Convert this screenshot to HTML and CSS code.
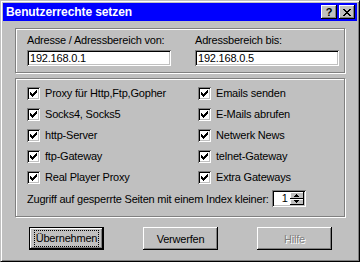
FILE: index.html
```html
<!DOCTYPE html>
<html lang="de">

<head>
    <meta charset="UTF-8">
    <title>Benutzerrechte setzen</title>
    <link rel="stylesheet" href="styles.css">
</head>

<body>
    <div class="window">
        <div class="titlebar">
            <span class="title">Benutzerrechte setzen</span>
            <div class="caption-buttons">
                <span class="cap cap-help">?</span>
                <span class="cap cap-close">
                    <svg width="8" height="7" viewBox="0 0 8 7">
                        <path d="M0 0h2v1H0z M6 0h2v1H6z M1 1h2v1H1z M5 1h2v1H5z M2 2h4v1H2z M3 3h2v1H3z M2 4h4v1H2z M1 5h2v1H1z M5 5h2v1H5z M0 6h2v1H0z M6 6h2v1H6z" fill="#000"/>
                    </svg>
                </span>
            </div>
        </div>

        <div class="client">
            <div class="group group-address">
                <div class="field">
                    <div class="label">Adresse / Adressbereich von:</div>
                    <div class="edit">192.168.0.1</div>
                </div>
                <div class="field">
                    <div class="label">Adressbereich bis:</div>
                    <div class="edit">192.168.0.5</div>
                </div>
            </div>

            <div class="group group-rights">
                <div class="checks" id="checks"></div>
                <div class="index-row">
                    <span>Zugriff auf gesperrte Seiten mit einem Index kleiner:</span>
                    <div class="spinner">
                        <span class="spin-value">1</span>
                        <div class="spin-buttons">
                            <span class="spin-btn">
                                <svg width="5" height="3" viewBox="0 0 5 3"><path d="M2 0h1v1H2z M1 1h3v1H1z M0 2h5v1H0z" fill="#000"/></svg>
                            </span>
                            <span class="spin-btn">
                                <svg width="5" height="3" viewBox="0 0 5 3"><path d="M0 0h5v1H0z M1 1h3v1H1z M2 2h1v1H2z" fill="#000"/></svg>
                            </span>
                        </div>
                    </div>
                </div>
            </div>

            <div class="buttons">
                <div class="btn btn-default"><span class="focus">Übernehmen</span></div>
                <div class="btn">Verwerfen</div>
                <div class="btn btn-disabled">Hilfe</div>
            </div>
        </div>
    </div>

    <script>
        let rights = [
            "Proxy für Http,Ftp,Gopher", "Socks4, Socks5", "http-Server", "ftp-Gateway", "Real Player Proxy",
            "Emails senden", "E-Mails abrufen", "Netwerk News", "telnet-Gateway", "Extra Gateways"
        ];

        const checks = document.getElementById("checks");
        rights.forEach((name) => {
            checks.innerHTML += `
            <div class="check">
                <span class="box"><svg width="13" height="13" viewBox="0 0 13 13"><path d="M3 5h1v3H3z M4 6h1v3H4z M5 7h1v3H5z M6 6h1v3H6z M7 5h1v3H7z M8 4h1v3H8z M9 3h1v3H9z" fill="#000"/></svg></span>
                <span class="check-label">${name}</span>
            </div>`;
        });
    </script>
</body>

</html>
```

FILE: styles.css
```css
body {
    margin: 0;
    font-family: "Liberation Sans", Arial, sans-serif;
    font-size: 11px;
    letter-spacing: -0.2px;
    color: #000;
}

.window {
    width: 360px;
    height: 262px;
    box-sizing: border-box;
    background: #c0c0c0;
    border: 1px solid;
    border-color: #c0c0c0 #000 #000 #c0c0c0;
    box-shadow: inset 1px 1px #fff, inset -1px -1px #808080;
    padding: 2px;
}

/* title bar */
.titlebar {
    height: 18px;
    background: #0000ff;
    display: flex;
    align-items: center;
    justify-content: space-between;
}

.title {
    color: #fff;
    font-weight: bold;
    font-size: 12px;
    letter-spacing: -0.1px;
    padding-left: 3px;
}

.caption-buttons {
    display: flex;
    gap: 2px;
    margin-right: 2px;
}

.cap {
    width: 16px;
    height: 14px;
    box-sizing: border-box;
    background: #c0c0c0;
    box-shadow: inset -1px -1px #000, inset 1px 1px #fff, inset -2px -2px #808080;
    display: flex;
    align-items: center;
    justify-content: center;
    font-weight: bold;
    font-size: 11px;
    line-height: 14px;
}

/* group boxes */
.client {
    padding: 7px 0 0 12px;
}

.group {
    width: 330px;
    box-sizing: border-box;
    border: 1px solid #808080;
    box-shadow: inset 1px 1px #fff, 1px 1px #fff;
}

.group-address {
    height: 45px;
    display: flex;
    gap: 24px;
    padding: 5px 0 0 11px;
}

.label {
    line-height: 13px;
}

.edit {
    width: 144px;
    height: 16px;
    box-sizing: border-box;
    margin-top: 3px;
    background: #fff;
    box-shadow: inset 1px 1px #808080, inset -1px -1px #fff, inset 2px 2px #000, inset -2px -2px #c0c0c0;
    padding: 0 3px;
    line-height: 16px;
}

.group-rights {
    height: 139px;
    margin-top: 5px;
    padding: 8px 0 0 11px;
}

.checks {
    display: grid;
    grid-template-columns: 171px 1fr;
    grid-template-rows: repeat(5, 21px);
    grid-auto-flow: column;
}

.check {
    display: flex;
    align-items: flex-start;
    gap: 5px;
}

.box {
    width: 13px;
    height: 13px;
    background: #fff;
    box-shadow: inset 1px 1px #808080, inset -1px -1px #fff, inset 2px 2px #000, inset -2px -2px #c0c0c0;
}

.box svg {
    display: block;
}

.check-label {
    line-height: 13px;
}

.index-row {
    display: flex;
    align-items: center;
    gap: 3px;
    height: 17px;
    margin-top: -2px;
}

.spinner {
    width: 34px;
    height: 17px;
    box-sizing: border-box;
    background: #fff;
    box-shadow: inset 1px 1px #808080, inset -1px -1px #fff, inset 2px 2px #000, inset -2px -2px #c0c0c0;
    display: flex;
    justify-content: flex-end;
    padding: 2px;
}

.spin-value {
    line-height: 13px;
    padding-right: 2px;
}

.spin-buttons {
    display: flex;
    flex-direction: column;
}

.spin-btn {
    width: 14px;
    height: 6.5px;
    background: #c0c0c0;
    box-shadow: inset -1px -1px #000, inset 1px 1px #fff;
    display: flex;
    align-items: center;
    justify-content: center;
}

.spin-btn svg {
    display: block;
}

/* push buttons */
.buttons {
    display: flex;
    gap: 39px;
    margin: 10px 0 0 14px;
}

.btn {
    width: 75px;
    height: 23px;
    box-sizing: border-box;
    background: #c0c0c0;
    box-shadow: inset -1px -1px #000, inset 1px 1px #fff, inset -2px -2px #808080;
    display: flex;
    align-items: center;
    justify-content: center;
}

.btn-default {
    border: 1px solid #000;
}

.focus {
    outline: 1px dotted #000;
    padding: 1px 1px;
    line-height: 13px;
}

.btn-disabled {
    color: #808080;
    text-shadow: 1px 1px #fff;
}
```
